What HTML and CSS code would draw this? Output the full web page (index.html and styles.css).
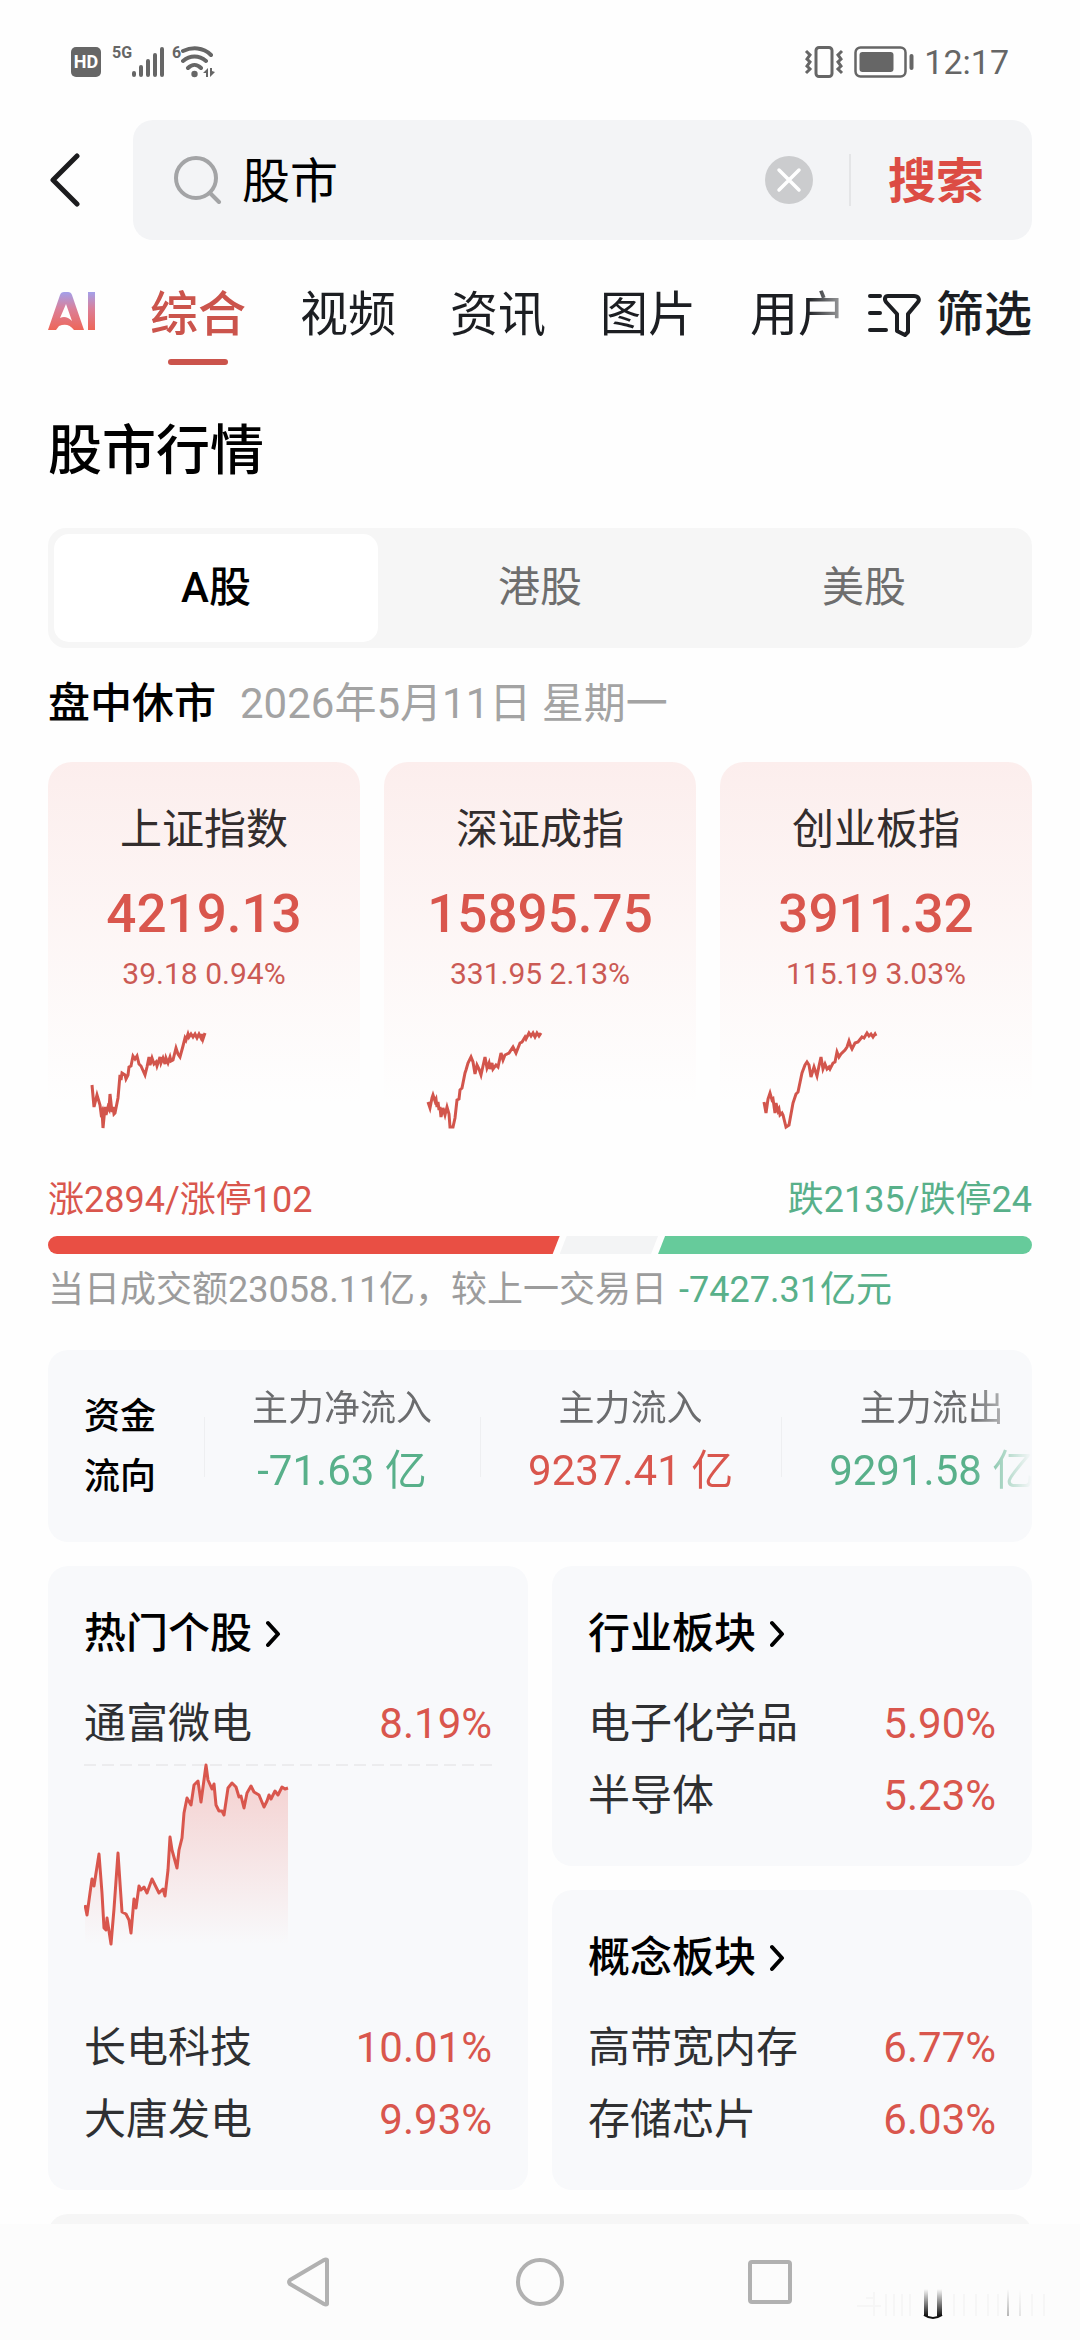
FILE: index.html
```
<!DOCTYPE html>
<html lang="zh-CN">
<head>
    <meta charset="UTF-8">
    <meta name="viewport" content="width=device-width, initial-scale=1.0">
    <title>股市 - 搜索</title>
    <link rel="stylesheet" href="styles.css">
</head>
<body>
    <div class="status-bar">
        <div class="status-left">
            <span class="hd">HD</span>
            <span class="net">5G</span>
            <svg class="signal" width="32" height="30" viewBox="0 0 32 30" fill="none" stroke="#666" stroke-width="4" stroke-linecap="round">
                <path d="M2 26v2M9 20v8M16 14v14M23 8v20M30 2v26"/>
            </svg>
            <span class="net">6</span>
            <svg width="34" height="32" viewBox="0 0 34 32" fill="none" stroke="#666" stroke-width="4">
                <path d="M2 5C11 1 22 1 30 9M2 15c7-6 16-6 23 0M7 22c4-4 9-4 13 0" stroke-linecap="round"/>
                <circle cx="13.500" cy="28" r="3.200" fill="#666" stroke="none"/>
                <path d="M22 27l5-5v9h-2v-4zM34 26l-5 5v-9h2v3z" fill="#666" stroke="none"/>
            </svg>
        </div>
        <div class="status-right">
            <svg width="40" height="32" viewBox="0 0 40 32" fill="none" stroke="#666" stroke-width="3">
                <rect x="12" y="1.500" width="16" height="29" rx="3"/>
                <path d="M2 5l4 4-3 4 3 3-3 4 3 3-4 4M38 5l-4 4 3 4-3 3 3 4-3 3 4 4"/>
            </svg>
            <svg width="60" height="32" viewBox="0 0 60 32" fill="none" stroke="#666">
                <rect x="1.500" y="1.500" width="50" height="29" rx="5" stroke-width="2.500"/>
                <rect x="5.500" y="6" width="34" height="20" rx="3" fill="#666" stroke="none"/>
                <path d="M57.500 10v12" stroke-width="4" stroke-linecap="round"/>
            </svg>
            <span class="clock">12:17</span>
        </div>
    </div>

    <div class="search-row">
        <button class="back" type="button" aria-label="返回">
            <svg width="32" height="54" viewBox="0 0 32 54" fill="none" stroke="#1c1c1e" stroke-width="5" stroke-linecap="round" stroke-linejoin="round">
                <path d="M29 3L5 27l24 24"/>
            </svg>
        </button>
        <form class="search-box">
            <svg width="48" height="48" viewBox="0 0 48 48" fill="none" stroke="#a3a4a6" stroke-width="4" stroke-linecap="round">
                <circle cx="22" cy="22" r="20"/>
                <path d="M36 37l9 9"/>
            </svg>
            <input type="text" value="股市" aria-label="搜索内容">
            <button class="clear" type="button" aria-label="清空">
                <svg width="48" height="48" viewBox="0 0 48 48">
                    <circle cx="24" cy="24" r="24" fill="#cbccce"/>
                    <path d="M14 14l20 20M34 14L14 34" stroke="#fff" stroke-width="3.500" stroke-linecap="round"/>
                </svg>
            </button>
            <button class="submit" type="submit">搜索</button>
        </form>
    </div>

    <div class="tab-row">
        <nav class="tabs">
            <a class="ai" href="#" aria-label="AI">
                <svg width="48" height="40" viewBox="0 0 48 40">
                    <defs>
                        <linearGradient id="aiFill" x1="0" y1="0" x2="0" y2="1">
                            <stop offset="0" stop-color="#a3a0ea"/>
                            <stop offset="0.450" stop-color="#db7f98"/>
                            <stop offset="1" stop-color="#ee6658"/>
                        </linearGradient>
                    </defs>
                    <path d="M0 39L12 4Q13 1 16 1h4q3 0 4 3l12 35H26Q20 31 11 35L8 39zM12 27q6-3 12 3L18 13z" fill="url(#aiFill)" fill-rule="evenodd"/>
                    <rect x="40" y="1" width="7" height="38" fill="url(#aiFill)"/>
                </svg>
            </a>
            <a class="active" href="#">综合</a>
            <a href="#">视频</a>
            <a href="#">资讯</a>
            <a href="#">图片</a>
            <a href="#">用户</a>
        </nav>
        <button class="filter" type="button">
            <svg width="54" height="44" viewBox="0 0 54 44" fill="none" stroke="#1c1e22" stroke-width="4" stroke-linecap="round" stroke-linejoin="round">
                <path d="M3 3h10M3 20h10M3 37h16"/>
                <path d="M21 3h26c4 0 6 3 4 6L41 21v18l-3 3-8-4V21L19 9c-2-3-1-6 2-6z"/>
            </svg>
            筛选
        </button>
    </div>

    <main>
        <h1>股市行情</h1>

        <div class="segment">
            <button class="active" type="button">A股</button>
            <button type="button">港股</button>
            <button type="button">美股</button>
        </div>

        <p class="market-state"><strong>盘中休市</strong><span>2026年5月11日 星期一</span></p>

        <div class="index-list">
            <a class="index-card" href="#">
                <h2>上证指数</h2>
                <div class="price">4219.13</div>
                <div class="change">39.18 0.94%</div>
                <svg viewBox="0 0 224 96">
                    <path d="M0 53L2 75 5 63 8 73 9 81 10 79 11 96 13 75 14 83 16 75 17 77 18 62 20 80 21 75 22 82 23 81 26 66 28 43 29 48 30 41 33 43 34 47 36 43 37 35 39 34 41 24 43 27 45 24 47 32 49 34 53 43 55 35 57 25 58 33 60 26 62 32 64 30 65 34 68 25 69 31 71 26 73 32 74 26 76 31 78 25 79 29 81 28 84 16 86 22 88 25 91 14 93 6 94 8 96 2 97 5 99 2 101 5 103 2 105 6 107 2 109 6 110 2 111 7 113 1"/>
                </svg>
            </a>
            <a class="index-card" href="#">
                <h2>深证成指</h2>
                <div class="price">15895.75</div>
                <div class="change">331.95 2.13%</div>
                <svg viewBox="0 0 224 96">
                    <path d="M0 70L2 76 4 66 5 63 7 69 8 67 9 75 10 70 11 78 12 75 13 85 15 76 17 83 19 75 21 82 22 95 25 95 27 86 29 68 31 67 32 58 34 56 37 41 38 38 40 31 43 25 45 30 47 42 49 33 51 37 53 43 57 25 59 36 61 31 62 37 64 31 65 37 68 33 70 35 73 21 75 28 77 23 81 21 85 15 88 21 92 11 94 10 97 5 98 7 101 1 103 4 105 1 107 5 109 1 111 4 113 1"/>
                </svg>
            </a>
            <a class="index-card" href="#">
                <h2>创业板指</h2>
                <div class="price">3911.32</div>
                <div class="change">115.19 3.03%</div>
                <svg viewBox="0 0 224 96">
                    <path d="M0 70L2 81 4 67 6 61 8 68 9 67 11 81 12 71 14 79 15 77 16 83 18 81 19 83 22 95 25 93 29 71 32 62 34 60 38 41 41 33 43 30 45 33 47 45 50 35 53 44 55 34 57 25 59 37 61 32 63 37 65 35 66 37 69 31 71 30 73 20 75 25 77 22 81 18 83 15 85 9 87 15 88 17 91 11 94 10 98 5 100 6 103 1 105 4 107 2 109 5 111 2 112 4"/>
                </svg>
            </a>
        </div>

        <div class="breadth">
            <div class="breadth-text">
                <span class="up">涨2894/涨停102</span>
                <span class="down">跌2135/跌停24</span>
            </div>
            <div class="breadth-bar">
                <div class="bar-up" style="width: 52%"></div>
                <div class="bar-flat" style="width: 10%"></div>
                <div class="bar-down" style="width: 38%"></div>
            </div>
            <p class="turnover">当日成交额23058.11亿，较上一交易日 <span class="down">-7427.31亿元</span></p>
        </div>

        <section class="flow">
            <h2>资金<br>流向</h2>
            <ul>
                <li><span>主力净流入</span><b class="down">-71.63 亿</b></li>
                <li><span>主力流入</span><b class="up">9237.41 亿</b></li>
                <li><span>主力流出</span><b class="down">9291.58 亿</b></li>
            </ul>
        </section>

        <div class="boards">
            <section class="board hot">
                <h2><a href="#">热门个股
                    <svg width="15" height="28" viewBox="0 0 15 28"><path d="M2 3l10 11L2 25"/></svg>
                </a></h2>
                <ul>
                    <li><span>通富微电</span><span class="up">8.19%</span></li>
                </ul>
                <svg class="stock-chart" viewBox="0 0 408 252">
                    <defs>
                        <linearGradient id="areaFill" x1="0" y1="0" x2="0" y2="1">
                            <stop offset="0" stop-color="#e84f45" stop-opacity="0.250"/>
                            <stop offset="1" stop-color="#e84f45" stop-opacity="0"/>
                        </linearGradient>
                    </defs>
                    <path class="top-line" d="M0 5h408"/>
                    <g transform="translate(0 4)">
                        <path class="area" d="M1 141L3 151 6 129 8 115 10 122 15 90 18 129 20 164 22 166 23 154 27 180 30 145 34 89 36 119 38 148 42 150 45 156 47 169 50 135 52 144 55 122 57 126 60 123 63 129 68 115 71 121 75 129 79 125 81 132 84 106 86 73 88 86 93 104 95 86 98 74 100 49 103 34 107 41 110 21 114 17 117 38 122 1 124 16 128 25 130 20 132 41 135 47 138 47 140 51 144 24 148 19 152 23 155 33 157 32 160 44 163 29 167 22 170 28 175 31 180 43 183 37 185 31 187 35 191 27 194 31 198 23 201 25 204 24V180H1z"/>
                        <path class="line" d="M1 141L3 151 6 129 8 115 10 122 15 90 18 129 20 164 22 166 23 154 27 180 30 145 34 89 36 119 38 148 42 150 45 156 47 169 50 135 52 144 55 122 57 126 60 123 63 129 68 115 71 121 75 129 79 125 81 132 84 106 86 73 88 86 93 104 95 86 98 74 100 49 103 34 107 41 110 21 114 17 117 38 122 1 124 16 128 25 130 20 132 41 135 47 138 47 140 51 144 24 148 19 152 23 155 33 157 32 160 44 163 29 167 22 170 28 175 31 180 43 183 37 185 31 187 35 191 27 194 31 198 23 201 25 204 24"/>
                    </g>
                </svg>
                <ul>
                    <li><span>长电科技</span><span class="up">10.01%</span></li>
                    <li><span>大唐发电</span><span class="up">9.93%</span></li>
                </ul>
            </section>
            <section class="board">
                <h2><a href="#">行业板块
                    <svg width="15" height="28" viewBox="0 0 15 28"><path d="M2 3l10 11L2 25"/></svg>
                </a></h2>
                <ul>
                    <li><span>电子化学品</span><span class="up">5.90%</span></li>
                    <li><span>半导体</span><span class="up">5.23%</span></li>
                </ul>
            </section>
            <section class="board">
                <h2><a href="#">概念板块
                    <svg width="15" height="28" viewBox="0 0 15 28"><path d="M2 3l10 11L2 25"/></svg>
                </a></h2>
                <ul>
                    <li><span>高带宽内存</span><span class="up">6.77%</span></li>
                    <li><span>存储芯片</span><span class="up">6.03%</span></li>
                </ul>
            </section>
        </div>

        <div class="next-card"></div>
    </main>

    <div class="nav-bar">
        <button type="button" aria-label="返回">
            <svg width="48" height="52" viewBox="0 0 48 52"><path d="M41 4v44q-1 1-3 0L4 28q-2-2 0-4L38 4q2-1 3 0z"/></svg>
        </button>
        <button type="button" aria-label="主屏幕">
            <svg width="52" height="52" viewBox="0 0 52 52"><circle cx="26" cy="26" r="22"/></svg>
        </button>
        <button type="button" aria-label="最近任务">
            <svg width="48" height="52" viewBox="0 0 48 52"><rect x="4" y="6" width="40" height="40" rx="2"/></svg>
        </button>
        <!-- faded watermark in the corner -->
        <svg class="watermark" width="200" height="36" viewBox="0 0 200 36" fill="none">
            <defs>
                <linearGradient id="fade" x1="0" y1="0" x2="0" y2="1">
                    <stop offset="0" stop-color="#111" stop-opacity="0"/>
                    <stop offset="1" stop-color="#111"/>
                </linearGradient>
            </defs>
            <rect x="68" y="3" width="4" height="27" fill="url(#fade)"/>
            <rect x="81" y="3" width="5" height="27" fill="url(#fade)"/>
            <path d="M68 29q9 6 18 0" stroke="#111" stroke-width="2"/>
            <rect x="151" y="3" width="2" height="27" fill="url(#fade)" opacity="0.300"/>
            <rect x="163" y="3" width="2" height="27" fill="url(#fade)" opacity="0.100"/>
            <path d="M1 20h24M10 12h8M18 6v24M30 8v22M38 8v22M46 8v22M54 8v22M98 8v22M108 8v22M120 8v22M132 8v22M142 8v22M176 8v22M188 8v22" stroke="#f6f6f6" stroke-width="2"/>
        </svg>
    </div>
</body>
</html>
```
FILE: styles.css
```
* {
    box-sizing: border-box;
}

body {
    margin: 0;
    height: 100vh;
    display: flex;
    flex-direction: column;
    overflow: hidden;
    background-color: #fefefe;
    color: #000;
    font-family: Roboto, "Noto Sans CJK SC", sans-serif;
}

h1, h2, p, ul {
    margin: 0;
    padding: 0;
    font-weight: 500;
}

ul {
    list-style: none;
}

a {
    color: inherit;
    text-decoration: none;
}

button {
    padding: 0;
    border: none;
    background: none;
    font-family: inherit;
    color: inherit;
    cursor: pointer;
}

svg {
    display: block;
    flex: none;
}

.up {
    color: #d9564d;
}

.down {
    color: #58b08a;
}

/* status bar */
.status-bar {
    height: 120px;
    flex: none;
    display: flex;
    justify-content: space-between;
    align-items: center;
    padding: 4px 71px 0;
    color: #666;
}

.status-left,
.status-right {
    display: flex;
    align-items: center;
}

.hd {
    width: 30px;
    margin-right: 11px;
    border-radius: 5px;
    background-color: #666;
    color: #fff;
    font-size: 18px;
    font-weight: 700;
    line-height: 30px;
    text-align: center;
}

.net {
    align-self: flex-start;
    font-size: 16px;
    font-weight: 700;
    line-height: 14px;
}

.signal {
    margin-right: 8px;
}

.status-right {
    gap: 10px;
}

.clock {
    font-size: 34px;
    line-height: 32px;
}

/* search */
.search-row {
    flex: none;
    display: flex;
    align-items: center;
    padding: 0 48px;
}

.back {
    flex: none;
    width: 85px;
}

.search-box {
    flex: 1;
    min-width: 0;
    height: 120px;
    display: flex;
    align-items: center;
    padding: 0 48px 0 41px;
    border-radius: 20px;
    background-color: #f3f4f6;
}

.search-box input {
    flex: 1;
    min-width: 0;
    margin: 0 20px;
    padding: 4px 0 0;
    border: none;
    outline: none;
    background: none;
    font-family: inherit;
    font-size: 48px;
    line-height: 72px;
    color: #000;
}

.submit {
    flex: none;
    margin-left: 36px;
    padding: 4px 0 0 37px;
    border-left: 2px solid #e4e5e7;
    color: #dc4c44;
    font-size: 48px;
    font-weight: 700;
    line-height: 48px;
}

/* tabs */
.tab-row {
    flex: none;
    display: flex;
    align-items: flex-start;
    padding: 42px 48px 0;
    color: #1c1e22;
    font-size: 48px;
    line-height: 66px;
}

.tabs {
    flex: 1;
    min-width: 0;
    height: 84px;
    display: flex;
    gap: 54px;
    overflow: hidden;
    white-space: nowrap;
    -webkit-mask-image: linear-gradient(to right, #000 calc(100% - 60px), transparent);
    mask-image: linear-gradient(to right, #000 calc(100% - 60px), transparent);
}

.tabs a {
    flex: none;
}

.tabs .ai {
    padding-top: 9px;
}

.tabs .active {
    color: #cb544c;
    font-weight: 500;
}

.tabs .active::after {
    content: "";
    display: block;
    width: 60px;
    height: 6px;
    margin: 11px auto 0;
    border-radius: 3px;
    background-color: #cb544c;
}

.filter {
    display: flex;
    align-items: center;
    gap: 15px;
    font-size: 48px;
    font-weight: 500;
    line-height: 66px;
}

/* content */
main {
    flex: 1;
    min-height: 0;
    overflow: hidden;
    padding: 50px 48px 0;
}

h1 {
    font-size: 54px;
    line-height: 72px;
}

.segment {
    display: grid;
    grid-template-columns: repeat(3, 1fr);
    height: 120px;
    margin-top: 40px;
    padding: 6px;
    border-radius: 18px;
    background-color: #f6f6f6;
}

.segment button {
    padding-bottom: 10px;
    border-radius: 15px;
    color: #6e6e6e;
    font-size: 42px;
}

.segment .active {
    background-color: #fff;
    color: #000;
    font-weight: 500;
}

.market-state {
    display: flex;
    gap: 24px;
    margin: 26px 0 28px;
    font-size: 42px;
    line-height: 60px;
}

.market-state strong {
    font-weight: 500;
}

.market-state span {
    color: #a3a3a3;
    font-weight: 400;
}

.index-list {
    display: grid;
    grid-template-columns: repeat(3, 1fr);
    gap: 24px;
}

.index-card {
    padding: 38px 0 14px;
    border-radius: 24px;
    background-image: linear-gradient(#fceeed, #fefefe 90%);
    text-align: center;
}

.index-card h2 {
    color: #332d2d;
    font-size: 42px;
    font-weight: 400;
    line-height: 60px;
}

.price {
    margin-top: 18px;
    color: #d9564d;
    font-size: 53px;
    font-weight: 500;
    line-height: 72px;
}

.change {
    margin-top: 6px;
    color: #cb5a54;
    font-size: 30px;
    line-height: 36px;
}

.index-card svg {
    height: 96px;
    margin: 40px 44px 0;
    overflow: visible;
}

.index-card path {
    fill: none;
    stroke: #d2554c;
    stroke-width: 3;
}

.breadth {
    margin-top: 34px;
    font-size: 36px;
    line-height: 48px;
}

.breadth-text {
    display: flex;
    justify-content: space-between;
}

.breadth-bar {
    display: flex;
    height: 18px;
    margin: 12px 0;
    border-radius: 9px;
    overflow: hidden;
}

.bar-up {
    background-color: #e94f44;
    clip-path: polygon(0 0, 100% 0, calc(100% - 7px) 100%, 0 100%);
}

.bar-flat {
    background-color: #f3f4f5;
    clip-path: polygon(7px 0, 100% 0, calc(100% - 7px) 100%, 0 100%);
}

.bar-down {
    background-color: #66cb9b;
    clip-path: polygon(7px 0, 100% 0, 100% 100%, 0 100%);
}

.turnover {
    color: #9c9c9c;
    font-weight: 400;
}

.turnover .down {
    margin-left: 3px;
}

/* money flow */
.flow {
    display: flex;
    align-items: center;
    height: 192px;
    margin: 36px 0 24px;
    padding: 2px 0 0 36px;
    border-radius: 20px;
    background-color: #f8f9fb;
    overflow: hidden;
}

.flow h2 {
    flex: none;
    margin-right: 48px;
    font-size: 36px;
    line-height: 60px;
}

.flow ul {
    flex: 1;
    min-width: 0;
    display: flex;
    overflow: hidden;
    -webkit-mask-image: linear-gradient(to right, #000 calc(100% - 60px), transparent);
    mask-image: linear-gradient(to right, #000 calc(100% - 60px), transparent);
}

.flow li {
    flex: none;
    display: flex;
    flex-direction: column;
    align-items: center;
    gap: 10px;
    padding: 0 48px 6px;
    background: linear-gradient(#eeeff1, #eeeff1) left center / 1px 60px no-repeat;
    white-space: nowrap;
}

.flow span {
    color: #6b6c6e;
    font-size: 36px;
    font-weight: 400;
    line-height: 44px;
}

.flow b {
    font-size: 42px;
    font-weight: 400;
    line-height: 60px;
}

/* boards */
.boards {
    display: grid;
    grid-template-columns: 1fr 1fr;
    gap: 24px;
}

.board {
    padding: 38px 36px 34px;
    border-radius: 20px;
    background-color: #f8f9fb;
    font-size: 42px;
    line-height: 72px;
}

.hot {
    grid-row: span 2;
}

.board h2 {
    margin-bottom: 24px;
    font-size: 42px;
    line-height: 60px;
}

.board h2 a {
    display: flex;
    align-items: center;
    gap: 14px;
}

.board h2 path {
    fill: none;
    stroke: #000;
    stroke-width: 4;
    stroke-linecap: round;
    stroke-linejoin: round;
}

.board li {
    display: flex;
    justify-content: space-between;
    color: #2f3032;
    font-weight: 400;
}

.stock-chart {
    width: 100%;
}

.top-line {
    stroke: #ececee;
    stroke-width: 2;
    stroke-dasharray: 12 6;
}

.area {
    fill: url(#areaFill);
}

.line {
    fill: none;
    stroke: #d9564d;
    stroke-width: 3;
    stroke-linejoin: round;
}

.next-card {
    height: 200px;
    margin-top: 24px;
    border-radius: 20px;
    background-color: #f6f6f6;
}

/* system navigation */
.nav-bar {
    position: relative;
    flex: none;
    height: 116px;
    display: flex;
    justify-content: center;
    align-items: center;
    gap: 180px;
    background-color: #fcfcfc;
}

.nav-bar button path,
.nav-bar button circle,
.nav-bar button rect {
    fill: none;
    stroke: #b1b1b1;
    stroke-width: 4;
    stroke-linejoin: round;
}

.watermark {
    position: absolute;
    right: 24px;
    bottom: 18px;
}
```
